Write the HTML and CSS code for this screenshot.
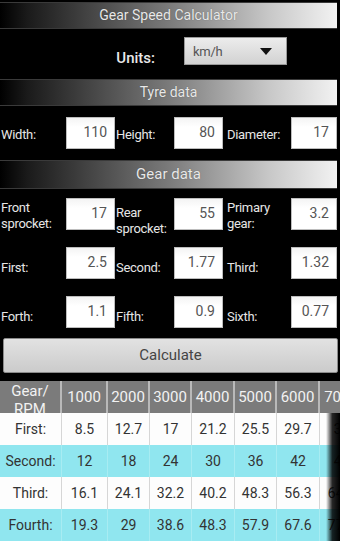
FILE: index.html
```html
<!DOCTYPE html>
<html>
<head>
<meta charset="utf-8">
<link rel="stylesheet" href="styles.css">
</head>
<body>
<div class="app">
  <div class="bar bar-title">Gear Speed Calculator</div>
  <div class="units-row">
    <span class="units-label">Units:</span>
    <div class="spinner">
      <span class="spinner-text">km/h</span>
      <svg class="spinner-arrow" width="12" height="7" viewBox="0 0 12 7"><path d="M0 0 L12 0 L6 7 Z" fill="#111"/></svg>
    </div>
  </div>
  <div class="bar bar-tyre">Tyre data</div>
  <div class="form-grid tyre-grid">
    <span class="lbl">Width:</span><div class="inp">110</div>
    <span class="lbl">Height:</span><div class="inp">80</div>
    <span class="lbl lbl-3">Diameter:</span><div class="inp">17</div>
  </div>
  <div class="bar bar-gear">Gear data</div>
  <div class="form-grid gear-grid">
    <span class="lbl lbl-two">Front<br>sprocket:</span><div class="inp">17</div>
    <span class="lbl lbl-two lbl-low">Rear<br>sprocket:</span><div class="inp">55</div>
    <span class="lbl lbl-two lbl-3">Primary<br>gear:</span><div class="inp">3.2</div>

    <span class="lbl lbl-bottom">First:</span><div class="inp">2.5</div>
    <span class="lbl lbl-bottom">Second:</span><div class="inp">1.77</div>
    <span class="lbl lbl-bottom lbl-3">Third:</span><div class="inp">1.32</div>

    <span class="lbl lbl-bottom">Forth:</span><div class="inp">1.1</div>
    <span class="lbl lbl-bottom">Fifth:</span><div class="inp">0.9</div>
    <span class="lbl lbl-bottom lbl-3">Sixth:</span><div class="inp">0.77</div>
  </div>
  <div class="btn-wrap"><div class="btn">Calculate</div></div>
  <div class="table-wrap">
    <div class="trow thead">
      <div class="cell"><div class="th-clip">Gear/<br>RPM</div></div>
      <div class="cell">1000</div><div class="cell">2000</div><div class="cell">3000</div><div class="cell">4000</div><div class="cell">5000</div><div class="cell">6000</div><div class="cell">7000</div>
    </div>
    <div class="trow row-w">
      <div class="cell">First:</div><div class="cell">8.5</div><div class="cell">12.7</div><div class="cell">17</div><div class="cell">21.2</div><div class="cell">25.5</div><div class="cell">29.7</div><div class="cell">34</div>
    </div>
    <div class="trow row-c">
      <div class="cell">Second:</div><div class="cell">12</div><div class="cell">18</div><div class="cell">24</div><div class="cell">30</div><div class="cell">36</div><div class="cell">42</div><div class="cell">48</div>
    </div>
    <div class="trow row-w">
      <div class="cell">Third:</div><div class="cell">16.1</div><div class="cell">24.1</div><div class="cell">32.2</div><div class="cell">40.2</div><div class="cell">48.3</div><div class="cell">56.3</div><div class="cell">64.3</div>
    </div>
    <div class="trow row-c">
      <div class="cell">Fourth:</div><div class="cell">19.3</div><div class="cell">29</div><div class="cell">38.6</div><div class="cell">48.3</div><div class="cell">57.9</div><div class="cell">67.6</div><div class="cell">77.2</div>
    </div>
    <div class="fade"></div>
  </div>
</div>
</body>
</html>
```

FILE: styles.css
```css
html, body {
  margin: 0;
  padding: 0;
  background: #000;
}
body {
  font-family: Roboto, "Noto Sans", "DejaVu Sans", sans-serif;
  width: 340px;
  height: 541px;
  overflow: hidden;
}
.app {
  width: 340px;
}
.bar {
  box-sizing: border-box;
  width: 337px;
  background: linear-gradient(90deg, #000 0%, #1a1a1a 8%, #7a7a7a 50%, #c8c8c8 80%, #f2f2f2 100%);
  color: #e8e8e8;
  font-size: 14px;
  text-align: center;
  border-top: 1px solid #3a3a3a;
  border-bottom: 1px solid #3a3a3a;
  text-shadow: 0 0 1px rgba(0,0,0,0.4);
}
.bar-title {
  margin-top: 2px;
  height: 27px;
  line-height: 25px;
}
.bar-tyre {
  height: 27px;
  line-height: 25px;
}
.bar-gear {
  height: 29px;
  line-height: 27px;
  font-size: 15px;
}
.units-row {
  box-sizing: border-box;
  height: 50px;
  padding-top: 8px;
  display: flex;
  align-items: flex-start;
}
.units-label {
  width: 155px;
  text-align: right;
  color: #e8e8e8;
  font-size: 15px;
  font-weight: 500;
  line-height: 28px;
  padding-top: 7px;
}
.spinner {
  box-sizing: border-box;
  margin-left: 29px;
  width: 103px;
  height: 28px;
  background: linear-gradient(180deg, #ececec, #d2d2d2);
  border: 1px solid #9a9a9a;
  display: flex;
  align-items: center;
  justify-content: space-between;
  padding: 0 14px 0 8px;
}
.spinner-text {
  font-size: 13px;
  color: #555;
  letter-spacing: -0.3px;
}
.form-grid {
  display: grid;
  grid-template-columns: 66px 49px 59px 49px 68px 46px;
}
.tyre-grid {
  box-sizing: border-box;
  height: 54px;
  padding-top: 11px;
  grid-auto-rows: 32px;
}
.gear-grid {
  padding-top: 9px;
  grid-auto-rows: 32px;
  row-gap: 17px;
}
.lbl {
  color: #e6e6e6;
  font-size: 13px;
  letter-spacing: -0.3px;
  align-self: center;
  padding-left: 1px;
  padding-top: 3px;
  white-space: nowrap;
}
.lbl-3 {
  padding-left: 4px;
}
.lbl-two {
  line-height: 16px;
  padding-top: 4px;
}
.lbl-low {
  padding-top: 14px;
}
.lbl-bottom {
  padding-top: 9px;
}
.inp {
  box-sizing: border-box;
  height: 32px;
  background: linear-gradient(180deg, #f4f4f4, #ffffff 30%, #ffffff);
  border: 1px solid #bdbdbd;
  color: #555;
  font-size: 14px;
  text-align: right;
  line-height: 28px;
  padding-right: 7px;
}
.btn-wrap {
  padding: 10px 2px 0 3px;
}
.btn {
  box-sizing: border-box;
  height: 35px;
  background: linear-gradient(180deg, #e2e2e2, #cbcbcb);
  border: 1px solid #8a8a8a;
  border-radius: 2px;
  color: #444;
  font-size: 15px;
  text-align: center;
  line-height: 33px;
}
.table-wrap {
  position: relative;
  margin-top: 8px;
  width: 340px;
  overflow: hidden;
}
.trow {
  display: grid;
  grid-template-columns: 62px 46px 42px 42px 43px 42px 43px 44px;
  width: 364px;
  font-size: 14px;
}
.cell {
  box-sizing: border-box;
  text-align: center;
  white-space: nowrap;
  overflow: hidden;
  height: 32px;
  line-height: 32px;
  color: #333;
  border-right: 1px solid #d6d6d6;
}
.thead .cell {
  height: 32px;
  background: #7b7b7b;
  color: #f2f2f2;
  font-size: 15px;
  line-height: 32px;
  border-right: 2px solid #b9b9b9;
}
.thead .th-clip {
  height: 32px;
  line-height: 18px;
  padding-top: 1px;
  box-sizing: border-box;
  overflow: hidden;
}
.row-w .cell {
  background: #fdfdfd;
}
.row-c .cell {
  background: #90e6ef;
  border-right-color: #a8ecf2;
}
.fade {
  position: absolute;
  right: 0;
  top: 32px;
  bottom: 0;
  width: 14px;
  background: linear-gradient(90deg, rgba(0,0,0,0), rgba(0,0,0,0.85) 45%, #000);
}
```
